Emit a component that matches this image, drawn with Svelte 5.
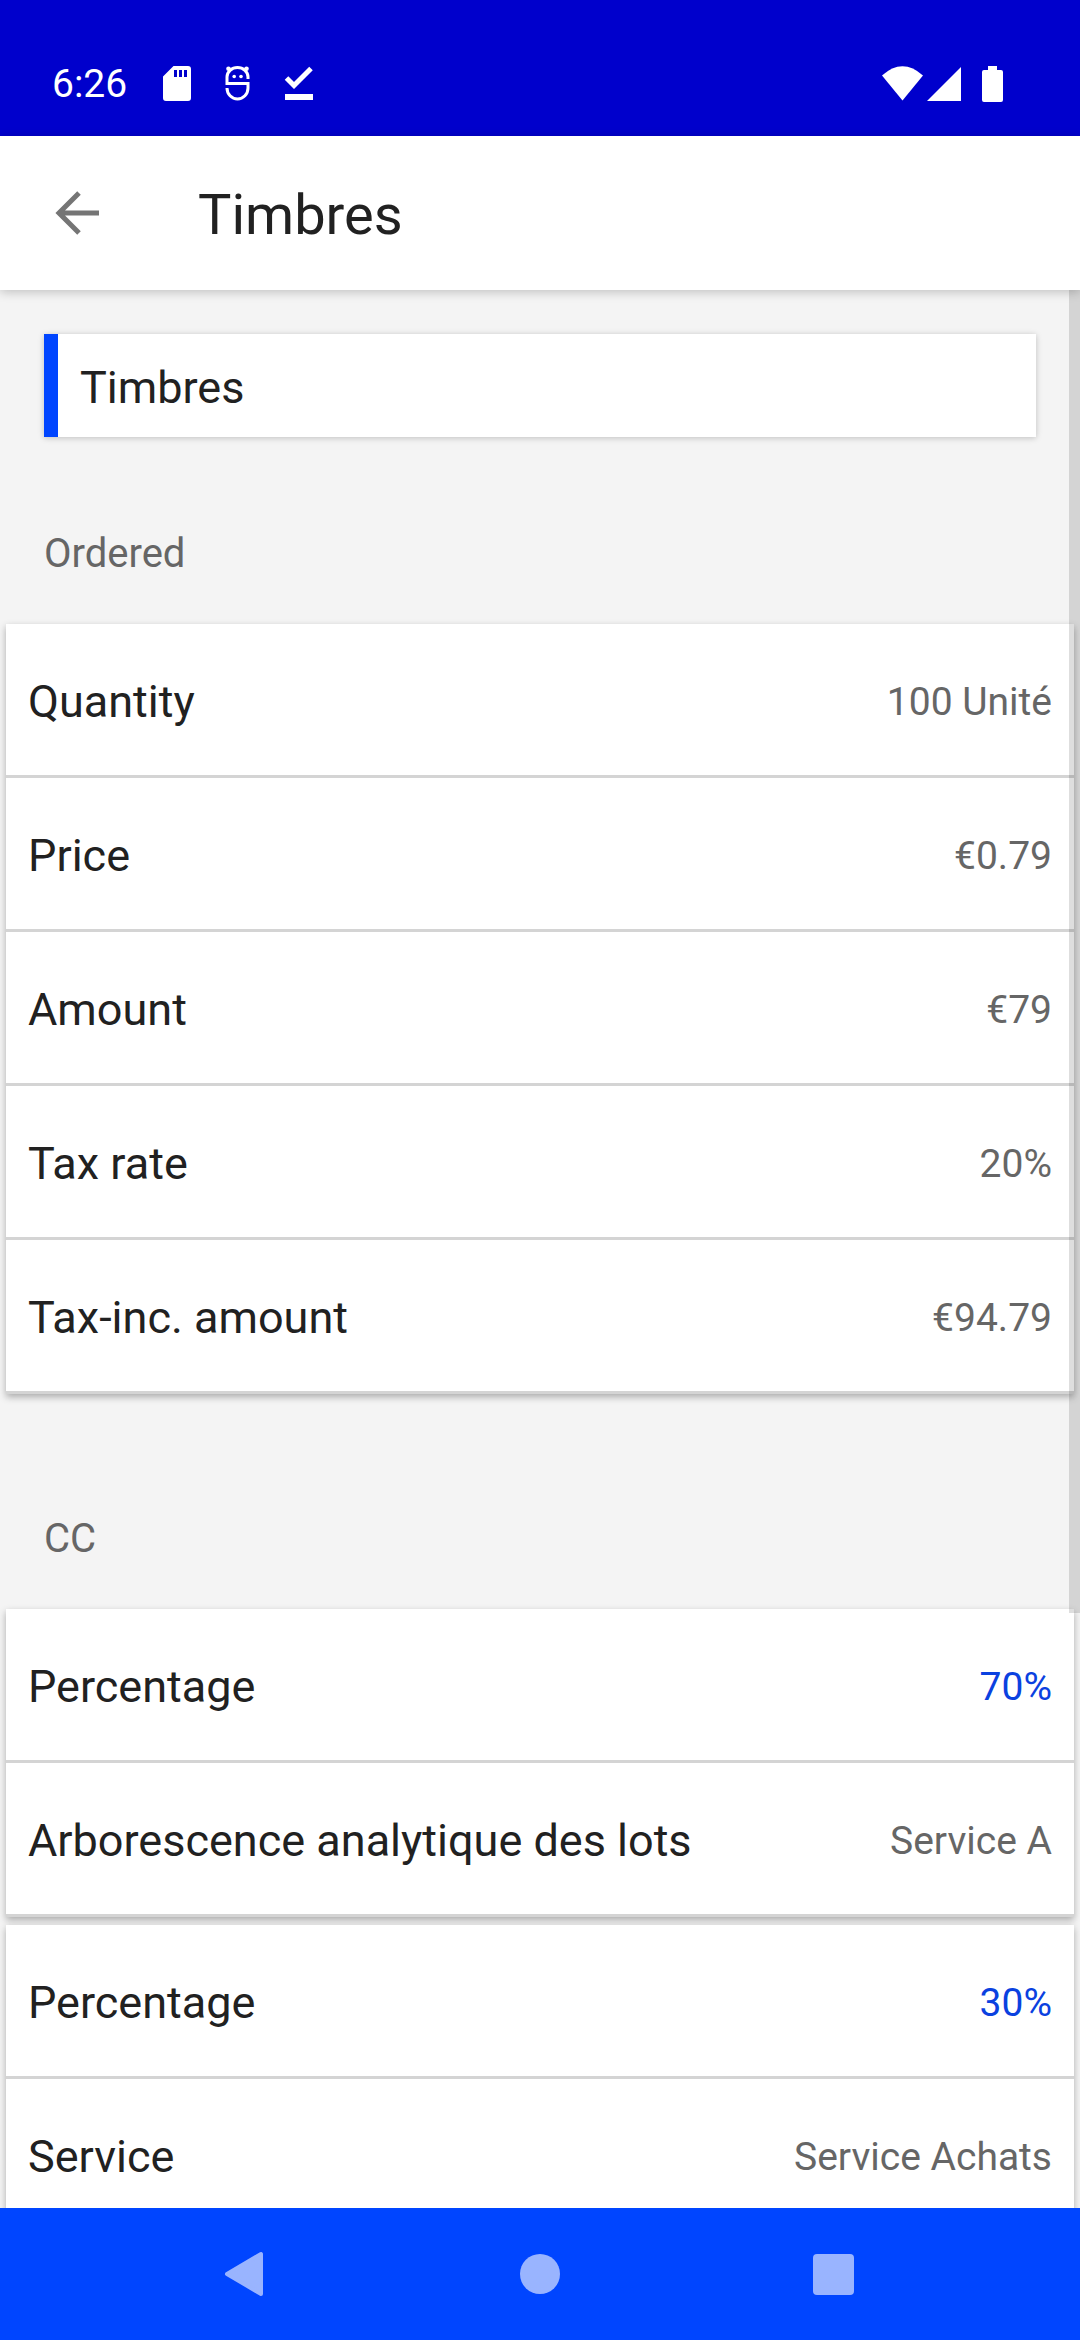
<script lang="ts">
  type Row = { label: string; value: string; accent?: boolean };

  const ordered: Row[] = [
    { label: 'Quantity', value: '100 Unité' },
    { label: 'Price', value: '€0.79' },
    { label: 'Amount', value: '€79' },
    { label: 'Tax rate', value: '20%' },
    { label: 'Tax-inc. amount', value: '€94.79' }
  ];

  const costCenters: Row[][] = [
    [
      { label: 'Percentage', value: '70%', accent: true },
      { label: 'Arborescence analytique des lots', value: 'Service A' }
    ],
    [
      { label: 'Percentage', value: '30%', accent: true },
      { label: 'Service', value: 'Service Achats' }
    ]
  ];
</script>

{#snippet card(rows: Row[])}
  <dl class="card">
    {#each rows as row}
      <div class="row">
        <dt>{row.label}</dt>
        <dd class:accent={row.accent}>{row.value}</dd>
      </div>
    {/each}
  </dl>
{/snippet}

<div class="screen">
  <div class="status">
    <span class="clock">6:26</span>
    <div class="notices">
      <svg width="28" height="36" viewBox="0 0 28 36" aria-hidden="true">
        <path fill="#fff" fill-rule="evenodd" d="M10.500 0H25a3 3 0 0 1 3 3v29a3 3 0 0 1-3 3H3a3 3 0 0 1-3-3V10.500zM11 4v7h3V4zm5 0v7h3V4zm5 0v7h3V4z" />
      </svg>
      <svg width="25" height="36" viewBox="0 0 25 36" aria-hidden="true">
        <path fill="none" stroke="#fff" stroke-width="3" d="M23 13V11A10.500 9.500 0 0 0 2 11V17.500H23V22A10.500 11 0 0 1 2 22" />
        <g fill="#fff">
          <circle cx="3.500" cy="2.800" r="2.300" />
          <circle cx="21.500" cy="2.800" r="2.300" />
          <circle cx="9.200" cy="10.500" r="1.800" />
          <circle cx="16" cy="10.500" r="1.800" />
        </g>
      </svg>
      <svg width="30" height="36" viewBox="0 0 30 36" aria-hidden="true">
        <path fill="none" stroke="#fff" stroke-width="5" d="M2.500 12l7.500 7.500L27 2.500" />
        <path fill="#fff" d="M1 28h28v6H1z" />
      </svg>
    </div>
    <div class="system">
      <svg width="80" height="36" viewBox="0 0 80 36" fill="#fff" aria-hidden="true">
        <path d="M0 9.500Q20.500-9 41 9.500L20.500 34.500z" />
        <path d="M45 35L79 1v34z" />
      </svg>
      <svg width="21" height="36" viewBox="0 0 21 36" fill="#fff" aria-hidden="true">
        <path d="M6 0h9v4h4a2 2 0 0 1 2 2v28a2 2 0 0 1-2 2H2a2 2 0 0 1-2-2V6a2 2 0 0 1 2-2h4z" />
      </svg>
    </div>
  </div>

  <header>
    <button class="back" aria-label="Back">
      <svg width="44" height="44" viewBox="0 0 44 44" fill="none" stroke="#757575" stroke-width="5" aria-hidden="true">
        <path d="M44 22H4M24 2L4 22l20 20" />
      </svg>
    </button>
    <h1>Timbres</h1>
  </header>

  <div class="body">
    <main>
      <div class="product">Timbres</div>
      <h2 class="first">Ordered</h2>
      {@render card(ordered)}
      <h2>CC</h2>
      <div class="stack">
        {#each costCenters as rows}
          {@render card(rows)}
        {/each}
      </div>
    </main>
    <div class="thumb"></div>
  </div>

  <nav>
    <button aria-label="Back">
      <svg width="46" height="46" viewBox="0 0 46 46" aria-hidden="true">
        <path fill="#99b4ff" stroke="#99b4ff" stroke-width="4" stroke-linejoin="round" d="M3 23L37 3v40z" />
      </svg>
    </button>
    <button aria-label="Home">
      <svg width="40" height="40" viewBox="0 0 40 40" aria-hidden="true"><circle cx="20" cy="20" r="20" fill="#99b4ff" /></svg>
    </button>
    <button aria-label="Recent apps">
      <svg width="41" height="41" viewBox="0 0 41 41" aria-hidden="true"><rect width="41" height="41" rx="4" fill="#99b4ff" /></svg>
    </button>
  </nav>
</div>

<style>
  :global(body) {
    margin: 0;
  }
  .screen {
    display: flex;
    flex-direction: column;
    height: 100vh;
    background: #f4f4f4;
    color: #212121;
    font-family: Roboto, 'Liberation Sans', sans-serif;
  }
  svg {
    display: block;
    flex: none;
  }
  button {
    display: flex;
    align-items: center;
    justify-content: center;
    padding: 0;
    border: 0;
    background: none;
  }
  .status {
    display: flex;
    align-items: center;
    height: 136px;
    flex: none;
    box-sizing: border-box;
    padding: 32px 77px 0 52px;
    background: #0000cc;
    color: #fff;
  }
  .clock {
    font-size: 39px;
  }
  .notices {
    display: flex;
    gap: 34px;
    margin-left: 36px;
  }
  .system {
    display: flex;
    gap: 20px;
    margin-left: auto;
  }
  header {
    position: relative;
    z-index: 1;
    display: flex;
    align-items: center;
    gap: 88px;
    height: 154px;
    flex: none;
    padding: 0 44px;
    background: #fff;
    box-shadow: 0 2px 10px rgba(0, 0, 0, 0.22);
  }
  .back {
    width: 66px;
    height: 66px;
  }
  h1 {
    margin: 0;
    padding-top: 4px;
    font-size: 56px;
    font-weight: 400;
  }
  .body {
    position: relative;
    flex: 1;
    min-height: 0;
  }
  main {
    height: 100%;
    box-sizing: border-box;
    overflow-y: auto;
    padding: 44px 6px 0;
    scrollbar-width: none;
  }
  .product {
    margin: 0 38px;
    padding: 27px 22px 22px;
    border-left: 14px solid #0045ff;
    background: #fff;
    box-shadow: 0 1px 6px rgba(0, 0, 0, 0.22);
    font-size: 45px;
    line-height: 54px;
  }
  h2 {
    margin: 121px 38px 46px;
    color: #666;
    font-size: 40px;
    font-weight: 400;
    line-height: 48px;
  }
  h2.first {
    margin-top: 93px;
  }
  .card {
    margin: 0;
    background: #fff;
    box-shadow: 0 3px 7px rgba(0, 0, 0, 0.3);
  }
  .stack {
    display: grid;
    gap: 8px;
  }
  .row {
    display: flex;
    align-items: center;
    justify-content: space-between;
    padding: 51px 22px 46px;
    border-bottom: 3px solid #d4d4d4;
  }
  dt {
    font-size: 45px;
    line-height: 54px;
  }
  dd {
    margin: 0;
    color: #666;
    font-size: 39px;
    line-height: 54px;
  }
  dd.accent {
    color: #0a41e0;
  }
  .thumb {
    position: absolute;
    top: 0;
    right: 0;
    width: 11px;
    height: 69%;
    background: rgba(0, 0, 0, 0.13);
  }
  nav {
    display: grid;
    grid-template-columns: repeat(3, 1fr);
    height: 132px;
    flex: none;
    padding: 0 100px;
    background: #0045ff;
  }
</style>
